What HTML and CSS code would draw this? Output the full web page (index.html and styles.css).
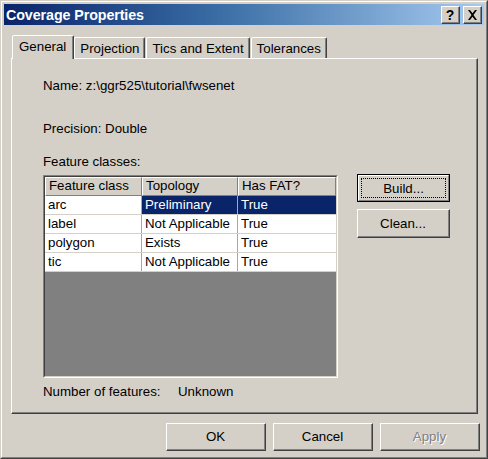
FILE: index.html
```html
<!DOCTYPE html>
<html>
<head>
<meta charset="utf-8">
<link rel="stylesheet" href="styles.css">
</head>
<body>
<div class="window">
  <div class="frame">
    <div class="titlebar">
      <span class="title">Coverage Properties</span>
      <div class="capbtns">
        <div class="capbtn help">?</div>
        <div class="capbtn close">
          <svg width="11" height="10" viewBox="0 0 11 10"><path d="M1 0h2l2.5 3.2L8 0h2L6.5 5 10 10H8L5.5 6.8 3 10H1l3.5-5z" fill="#000"/></svg>
        </div>
      </div>
    </div>
    <div class="dlgbody">
      <div class="tabs">
        <div class="tab selected">General</div>
        <div class="tab">Projection</div>
        <div class="tab">Tics and Extent</div>
        <div class="tab">Tolerances</div>
      </div>
      <div class="panel">
        <div class="line name">Name: z:\ggr525\tutorial\fwsenet</div>
        <div class="line precision">Precision: Double</div>
        <div class="line fclabel">Feature classes:</div>
        <div class="listrow">
          <div class="list">
            <div class="list-inner">
              <div class="row hdr">
                <div class="cell">Feature class</div>
                <div class="cell">Topology</div>
                <div class="cell">Has FAT?</div>
              </div>
              <div class="row">
                <div class="cell">arc</div>
                <div class="cell sel">Preliminary</div>
                <div class="cell sel">True</div>
              </div>
              <div class="row">
                <div class="cell">label</div>
                <div class="cell">Not Applicable</div>
                <div class="cell">True</div>
              </div>
              <div class="row">
                <div class="cell">polygon</div>
                <div class="cell">Exists</div>
                <div class="cell">True</div>
              </div>
              <div class="row">
                <div class="cell">tic</div>
                <div class="cell">Not Applicable</div>
                <div class="cell">True</div>
              </div>
            </div>
          </div>
          <div class="sidebtns">
            <div class="btn default"><div class="btn-in"><span class="focus">Build...</span></div></div>
            <div class="btn"><div class="btn-in">Clean...</div></div>
          </div>
        </div>
        <div class="line count"><span class="count-label">Number of features:</span><span>Unknown</span></div>
      </div>
      <div class="footer">
        <div class="btn wide"><div class="btn-in">OK</div></div>
        <div class="btn wide"><div class="btn-in">Cancel</div></div>
        <div class="btn wide"><div class="btn-in disabled">Apply</div></div>
      </div>
    </div>
  </div>
</div>
</body>
</html>
```
FILE: styles.css
```css
* { box-sizing: border-box; }
html, body { margin: 0; padding: 0; }
body {
  width: 488px;
  height: 459px;
  background: #d4d0c8;
  font-family: "Liberation Sans", Arial, sans-serif;
  font-size: 13.3px;
  color: #000;
  overflow: hidden;
}
.window {
  width: 488px;
  height: 459px;
  border: 1px solid;
  border-color: #d4d0c8 #404040 #404040 #d4d0c8;
}
.frame {
  width: 100%;
  height: 100%;
  border: 1px solid;
  border-color: #fff #808080 #808080 #fff;
  padding: 2px;
  display: flex;
  flex-direction: column;
}
.titlebar {
  height: 21px;
  background: linear-gradient(to right, #0a246a 0%, #3a6ea5 45%, #a6caf0 100%);
  display: flex;
  align-items: center;
  justify-content: space-between;
  padding: 0 2px 0 2px;
}
.title {
  color: #fff;
  font-weight: bold;
  font-size: 14.3px;
  letter-spacing: -0.1px;
}
.capbtns { display: flex; gap: 3px; }
.capbtn {
  width: 19px;
  height: 18px;
  background: #d4d0c8;
  border: 1px solid;
  border-color: #fff #404040 #404040 #fff;
  box-shadow: inset -1px -1px 0 #808080;
  display: flex;
  align-items: center;
  justify-content: center;
}
.capbtn.help {
  font-weight: bold;
  font-size: 14px;
  line-height: 1;
  padding-right: 1px;
}
.dlgbody {
  flex: 1;
  padding: 10px 0 0 7px;
  display: flex;
  flex-direction: column;
}
.tabs {
  display: flex;
  align-items: flex-end;
  height: 23px;
}
.tab {
  height: 21px;
  border: 1px solid;
  border-bottom: none;
  border-color: #fff #404040 transparent #fff;
  box-shadow: inset -1px 0 0 #808080;
  border-radius: 2px 2px 0 0;
  padding: 2px 5px 0 5px;
  line-height: 17px;
  margin-right: 1px;
}
.tab.selected {
  height: 24px;
  margin-bottom: -1px;
  background: #d4d0c8;
  position: relative;
  z-index: 1;
  padding: 2px 7px 0 6px;
  margin-left: 1px;
  margin-right: 0;
}
.panel {
  width: 467px;
  height: 356px;
  border: 1px solid;
  border-color: #fff #404040 #404040 #fff;
  box-shadow: inset -1px -1px 0 #808080;
  padding: 19px 0 0 31px;
  display: flex;
  flex-direction: column;
}
.line { line-height: 16px; height: 16px; white-space: nowrap; }
.precision { margin-top: 27px; }
.fclabel { margin-top: 17px; }
.listrow {
  margin-top: 5px;
  display: flex;
  gap: 19px;
  align-items: flex-start;
}
.list {
  width: 295px;
  height: 203px;
  border: 1px solid;
  border-color: #808080 #fff #fff #808080;
}
.list-inner {
  height: 100%;
  border: 1px solid;
  border-color: #404040 #d4d0c8 #d4d0c8 #404040;
  background: #808080;
}
.row {
  display: grid;
  grid-template-columns: 97px 96px 98px;
  height: 19px;
  background: #fff;
  border-bottom: 1px solid #d4d0c8;
}
.row .cell {
  padding-left: 3px;
  line-height: 18px;
  white-space: nowrap;
  overflow: hidden;
  border-right: 1px solid #a8a8a8;
}
.row .cell:last-child { border-right: none; }
.row .cell.sel { background: #0a246a; color: #fff; }
.row.hdr {
  background: #d4d0c8;
  height: 19px;
  border-bottom: none;
}
.row.hdr .cell {
  border-top: 1px solid #fff;
  border-left: 1px solid #fff;
  border-right: 1px solid #808080;
  border-bottom: 1px solid #808080;
  line-height: 16px;
  padding-left: 3px;
}
.row.hdr .cell:last-child { border-right: 1px solid #808080; }
.sidebtns {
  display: flex;
  flex-direction: column;
  gap: 7px;
  margin-top: -1px;
}
.btn {
  width: 93px;
  height: 29px;
  border: 1px solid;
  border-color: #fff #404040 #404040 #fff;
  background: #d4d0c8;
}
.btn-in {
  width: 100%;
  height: 100%;
  border-right: 1px solid #808080;
  border-bottom: 1px solid #808080;
  display: flex;
  align-items: center;
  justify-content: center;
}
.btn.default {
  border: 1px solid #000;
  height: 28px;
}
.btn.default .btn-in {
  border: 1px solid;
  border-color: #fff #808080 #808080 #fff;
  padding: 3px;
}
.focus {
  display: flex;
  align-items: center;
  justify-content: center;
  width: 100%;
  height: 100%;
  outline: 1px dotted #000;
}
.count { margin-top: 6px; }
.count-label { display: inline-block; width: 135px; }
.footer {
  display: flex;
  justify-content: flex-end;
  gap: 7px;
  margin-top: 9px;
  padding-right: 4px;
}
.btn.wide { width: 100px; height: 28px; }
.disabled { color: #808080; text-shadow: 1px 1px 0 #fff; }
```
